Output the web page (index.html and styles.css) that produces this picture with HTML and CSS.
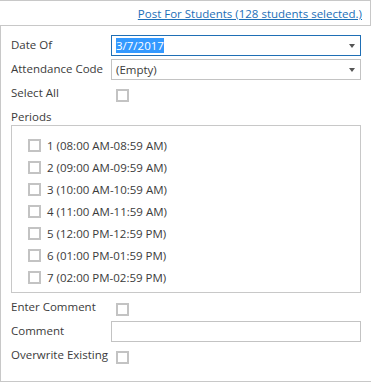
FILE: index.html
```html
<!DOCTYPE html>
<html lang="en">
<head>
  <meta charset="UTF-8" />
  <title>Post Attendance</title>
  <link rel="stylesheet" href="styles.css">
</head>
<body>
  <div class="panel">
    <div class="header">
      <a href="#" class="post-link">Post For Students (128 students selected.)</a>
    </div>
    <div class="form">
      <div class="row">
        <span class="label">Date Of</span>
        <div class="select focused">
          <span class="value selected">3/7/2017</span>
          <span class="arrow"></span>
        </div>
      </div>
      <div class="row">
        <span class="label">Attendance Code</span>
        <div class="select">
          <span class="value">(Empty)</span>
          <span class="arrow"></span>
        </div>
      </div>
      <div class="row check-row">
        <span class="label">Select All</span>
        <span class="checkbox"></span>
      </div>
      <div class="periods-label">Periods</div>
      <div class="periods">
        <div class="period"><span class="checkbox"></span>1 (08:00 AM-08:59 AM)</div>
        <div class="period"><span class="checkbox"></span>2 (09:00 AM-09:59 AM)</div>
        <div class="period"><span class="checkbox"></span>3 (10:00 AM-10:59 AM)</div>
        <div class="period"><span class="checkbox"></span>4 (11:00 AM-11:59 AM)</div>
        <div class="period"><span class="checkbox"></span>5 (12:00 PM-12:59 PM)</div>
        <div class="period"><span class="checkbox"></span>6 (01:00 PM-01:59 PM)</div>
        <div class="period"><span class="checkbox"></span>7 (02:00 PM-02:59 PM)</div>
      </div>
      <div class="row check-row">
        <span class="label">Enter Comment</span>
        <span class="checkbox"></span>
      </div>
      <div class="row">
        <span class="label">Comment</span>
        <div class="textbox"></div>
      </div>
      <div class="row check-row">
        <span class="label">Overwrite Existing</span>
        <span class="checkbox"></span>
      </div>
    </div>
  </div>
</body>
</html>
```

FILE: styles.css
```css
* {
  box-sizing: border-box;
  margin: 0;
  padding: 0;
}
body {
  background-color: #fff;
  color: #3b3b3b;
  font-family: 'Open Sans', sans-serif;
  font-size: 11.5px;
}
.panel {
  width: 371px;
}
.header {
  height: 26px;
  border-top: 1px solid #c8c8c8;
  border-right: 1px solid #c8c8c8;
  border-bottom: 1px solid #c8c8c8;
  text-align: right;
  padding: 5px 8px 0 0;
}
.post-link {
  color: #1c6fb8;
  text-decoration: underline;
}
.form {
  height: 356px;
  border-left: 1px solid #c8c8c8;
  border-bottom: 1px solid #c8c8c8;
  padding: 9px 10px 0 10px;
}
.row {
  display: flex;
  align-items: center;
  height: 21px;
  margin-bottom: 3px;
}
.label {
  width: 100px;
  flex-shrink: 0;
  padding-bottom: 2px;
}
.select,
.textbox {
  flex: 1;
  height: 21px;
  border: 1px solid #c3c3c3;
  display: flex;
  align-items: center;
  padding: 0 4px;
}
.select.focused {
  border-color: #1f6fb5;
}
.value.selected {
  background-color: #3399ff;
  color: #fff;
}
.arrow {
  margin-left: auto;
  width: 0;
  height: 0;
  border-left: 3.5px solid transparent;
  border-right: 3.5px solid transparent;
  border-top: 4px solid #555;
  margin-right: 1px;
}
.checkbox {
  display: inline-block;
  width: 13px;
  height: 13px;
  border: 2px solid #c3c3c3;
  background-color: #fff;
}
.check-row .checkbox {
  margin-left: 5px;
  margin-top: 3px;
}
.periods-label {
  height: 18px;
  padding-top: 2px;
}
.periods {
  height: 168px;
  border: 1px solid #c8c8c8;
  padding: 8px 0 0 16px;
  margin-bottom: 4px;
}
.period {
  display: flex;
  align-items: center;
  height: 22px;
}
.period .checkbox {
  margin-right: 6px;
}
```
